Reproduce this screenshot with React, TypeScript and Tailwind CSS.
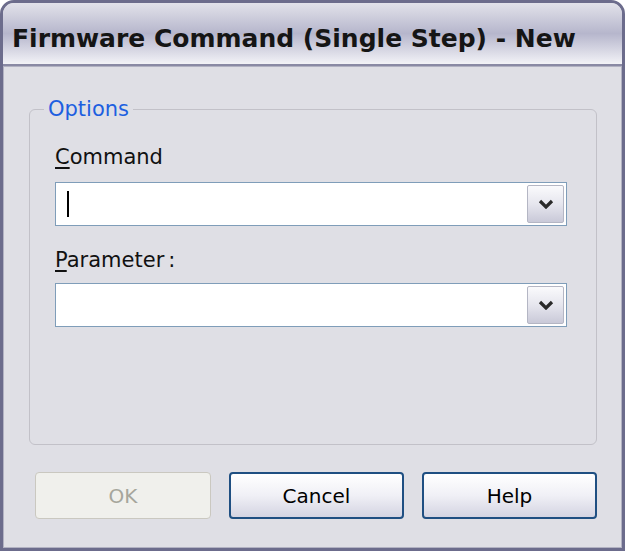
import React from 'react';

const font = { fontFamily: '"DejaVu Sans", Verdana, sans-serif' };

const Combo: React.FC<{ caret?: boolean }> = ({ caret }) => (
  <div className="flex h-[44px] w-[512px] items-stretch border border-[#7f9db9] bg-white p-[2px]">
    <div className="flex flex-1 items-center pl-[9px]">
      {caret && <div className="h-[26px] w-[2px] bg-black" />}
    </div>
    <div className="flex w-[37px] items-center justify-center rounded-[2px] border border-[#b4b6c4] bg-gradient-to-b from-[#fafafc] via-[#e6e6ee] to-[#c9c9d8]">
      <svg width="16" height="10" viewBox="0 0 16 10">
        <path d="M2 2 L8 8 L14 2" fill="none" stroke="#2a2a2a" strokeWidth="3.2" />
      </svg>
    </div>
  </div>
);

const Button: React.FC<{ label: string; disabled?: boolean }> = ({ label, disabled }) =>
  disabled ? (
    <div className="flex h-[47px] w-[176px] items-center justify-center rounded-[4px] border border-[#cac8c0] bg-[#f0f0ec] text-[20px] text-[#a6a69c]">
      {label}
    </div>
  ) : (
    <div className="flex h-[47px] w-[175px] items-center justify-center rounded-[4px] border-2 border-[#1f4f82] bg-gradient-to-b from-white via-[#f0f0f6] to-[#d4d4e2] text-[20px] text-black">
      {label}
    </div>
  );

export default function App() {
  return (
    <div className="h-[554px] w-[628px] bg-white" style={font}>
      <div className="flex h-[551px] w-[625px] flex-col overflow-hidden rounded-t-[14px] border-[3px] border-[#6c6c8c] bg-[#dfdfe5]">
        <div className="flex h-[61px] shrink-0 items-center bg-gradient-to-b from-[#e2e2ea] via-[#b6b6cc] to-[#f3f3f7] pl-[9px] pt-[10px] text-[25px] font-bold text-[#151515]">
          Firmware Command (Single Step) - New
        </div>
        <div className="h-[2px] shrink-0 bg-[#8a8aa4]" />
        <div className="flex flex-1 flex-col border border-[#b2b2c2] pt-[30px]">
          <fieldset className="ml-[25px] mr-[24px] h-[348px] rounded-[6px] border border-[#c2c1c8] pl-[25px]">
            <legend className="ml-[-11px] px-[4px] text-[21px] leading-[24px] text-[#1d5fe0]">Options</legend>
            <div className="pt-[24px] text-[21px] leading-[25px] text-[#111]">
              <span className="underline underline-offset-[3px]">C</span>ommand
            </div>
            <div className="mt-[12px]">
              <Combo caret />
            </div>
            <div className="mt-[22px] text-[21px] leading-[25px] text-[#111]">
              <span className="underline underline-offset-[3px]">P</span>arameter<span className="ml-[4px]">:</span>
            </div>
            <div className="mt-[10px]">
              <Combo />
            </div>
          </fieldset>
          <div className="ml-[31px] mt-[27px] flex gap-[18px]">
            <Button label="OK" disabled />
            <Button label="Cancel" />
            <Button label="Help" />
          </div>
        </div>
      </div>
    </div>
  );
}
